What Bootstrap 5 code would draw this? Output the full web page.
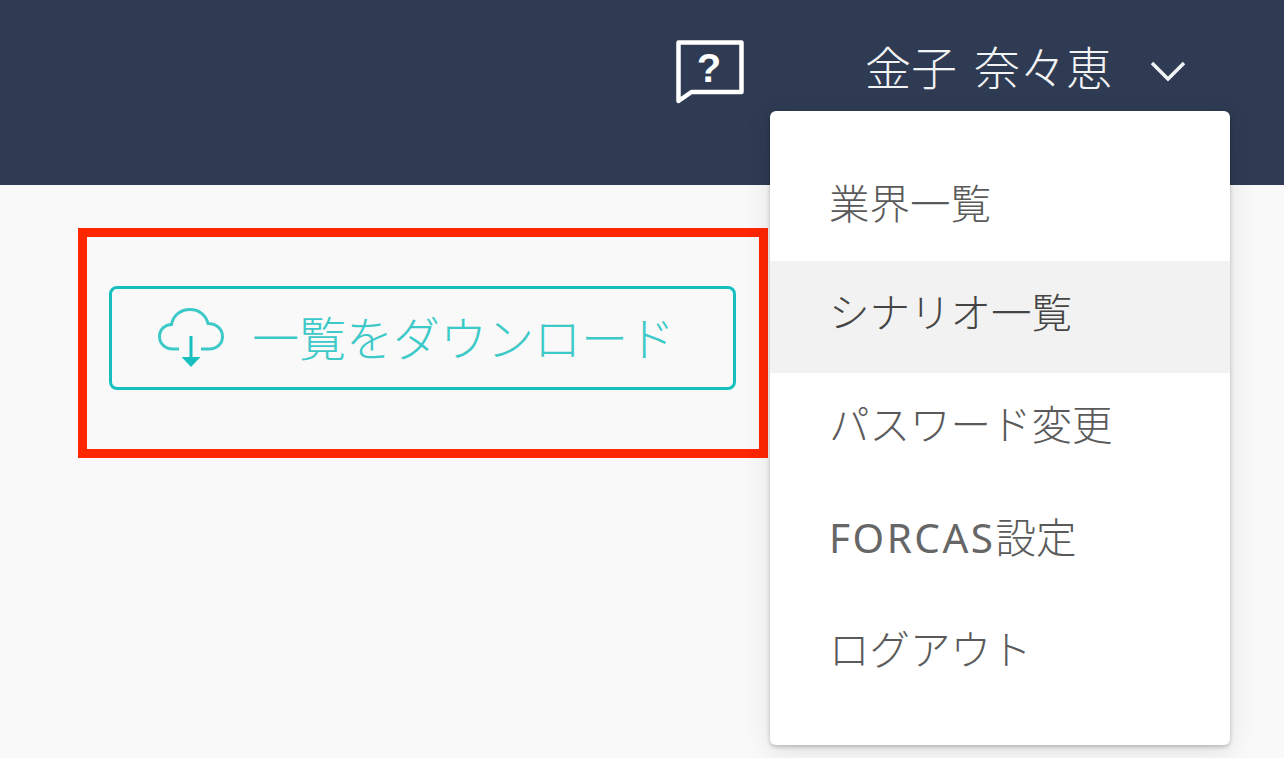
<!DOCTYPE html>
<html lang="ja">
<head>
<meta charset="UTF-8">
<meta name="viewport" content="width=device-width, initial-scale=1">
<title>シナリオ一覧</title>
<link href="https://cdn.jsdelivr.net/npm/bootstrap@5.3.0/dist/css/bootstrap.min.css" rel="stylesheet">
<style>
    body {
        font-family: "Noto Sans", "Noto Sans CJK JP", sans-serif;
        background-color: #f9f9f9;
        overflow: hidden;
        height: 758px;
    }
    .top-bar {
        background-color: #2e3b52;
        height: 185px;
        padding: 0 98px 52px 0;
    }
    .help-icon { margin-right: 121px; margin-top: 13px; }
    .user-toggle {
        color: #f2f3f5;
        font-size: 46px;
        font-weight: 300;
        line-height: 1;
        word-spacing: 5px;
        background: none;
        border: 0;
        padding: 0;
    }
    .user-toggle svg { margin-left: 38px; margin-top: 8px; }
    .user-menu {
        position: absolute;
        top: 111px;
        left: 770px;
        width: 460px;
        height: 634px;
        padding: 37px 0 0;
        border: 0;
        border-radius: 6px;
        box-shadow: 0 2px 4px rgba(0,0,0,.22), 0 6px 28px rgba(0,0,0,.1);
    }
    .user-menu .dropdown-item {
        height: 112.6px;
        padding: 0 0 8px 59px;
        font-size: 40.5px;
        font-weight: 300;
        color: #5a5a5a;
        display: flex;
        align-items: center;
    }
    .user-menu li:first-child .dropdown-item { padding-bottom: 0; }
    .user-menu .dropdown-item.current { background-color: #f2f2f2; color: #444; }
    .latin-word { letter-spacing: 2.5px; font-weight: 400; color: #666; }
    .note-box {
        width: 690px;
        height: 230px;
        margin: 43px 0 0 78px;
        padding: 49px 0 0 22px;
        border: 9px solid #ff2600;
    }
    .btn-download {
        width: 627px;
        height: 104px;
        padding: 0 0 0 46px;
        border: 3px solid #17c0bf;
        border-radius: 8px;
        background: none;
        color: #3cc9c8;
        font-size: 47px;
        font-weight: 300;
        line-height: 1;
        white-space: nowrap;
    }
    .btn-download:hover, .btn-download:active { border-color: #17c0bf; color: #3cc9c8; background: none; }
    .btn-download svg { margin-right: 28px; }
</style>
</head>
<body>

<header class="top-bar d-flex justify-content-end align-items-center">
    <a href="#" class="help-icon d-flex" aria-label="ヘルプ">
        <svg width="68" height="66" viewBox="0 0 68 66">
            <path d="M2.500 2.500H65.500V52H15.500L2.500 61Z" fill="none" stroke="#fff" stroke-width="4.500" stroke-linejoin="round"/>
            <text x="33" y="42" text-anchor="middle" font-family="Liberation Sans, sans-serif" font-size="40" font-weight="700" fill="#fff">?</text>
        </svg>
    </a>
    <button class="user-toggle d-flex align-items-center" type="button">
        金子 奈々恵
        <svg width="36" height="22" viewBox="0 0 36 22">
            <path d="M2 3L18 19L34 3" fill="none" stroke="#f2f3f5" stroke-width="3.500"/>
        </svg>
    </button>
</header>

<ul class="dropdown-menu show user-menu">
    <li><a class="dropdown-item" href="#">業界一覧</a></li>
    <li><a class="dropdown-item current" href="#">シナリオ一覧</a></li>
    <li><a class="dropdown-item" href="#">パスワード変更</a></li>
    <li><a class="dropdown-item" href="#"><span><span class="latin-word">FORCAS</span>設定</span></a></li>
    <li><a class="dropdown-item" href="#">ログアウト</a></li>
</ul>

<main class="note-box">
    <button class="btn btn-download d-flex align-items-center" type="button">
        <svg width="66" height="60" viewBox="0 0 66 60">
            <path d="M21 41H15C7 41 1.500 35.500 1.500 28.500C1.500 21.500 7 16.500 13.500 16.500C15 7.500 22.500 1.500 32 1.500C41 1.500 48 7 50 15.500C58 15.500 64.500 21 64.500 28.500C64.500 35.500 59 41 51 41H43" fill="none" stroke="#3cc9c8" stroke-width="3"/>
            <path d="M33 28V50" stroke="#17c0bf" stroke-width="3"/>
            <path d="M23.500 49H42.500L33 59Z" fill="#17c0bf"/>
        </svg>
        <span>一覧をダウンロード</span>
    </button>
</main>

<script src="https://cdn.jsdelivr.net/npm/bootstrap@5.3.0/dist/js/bootstrap.bundle.min.js"></script>
</body>
</html>
